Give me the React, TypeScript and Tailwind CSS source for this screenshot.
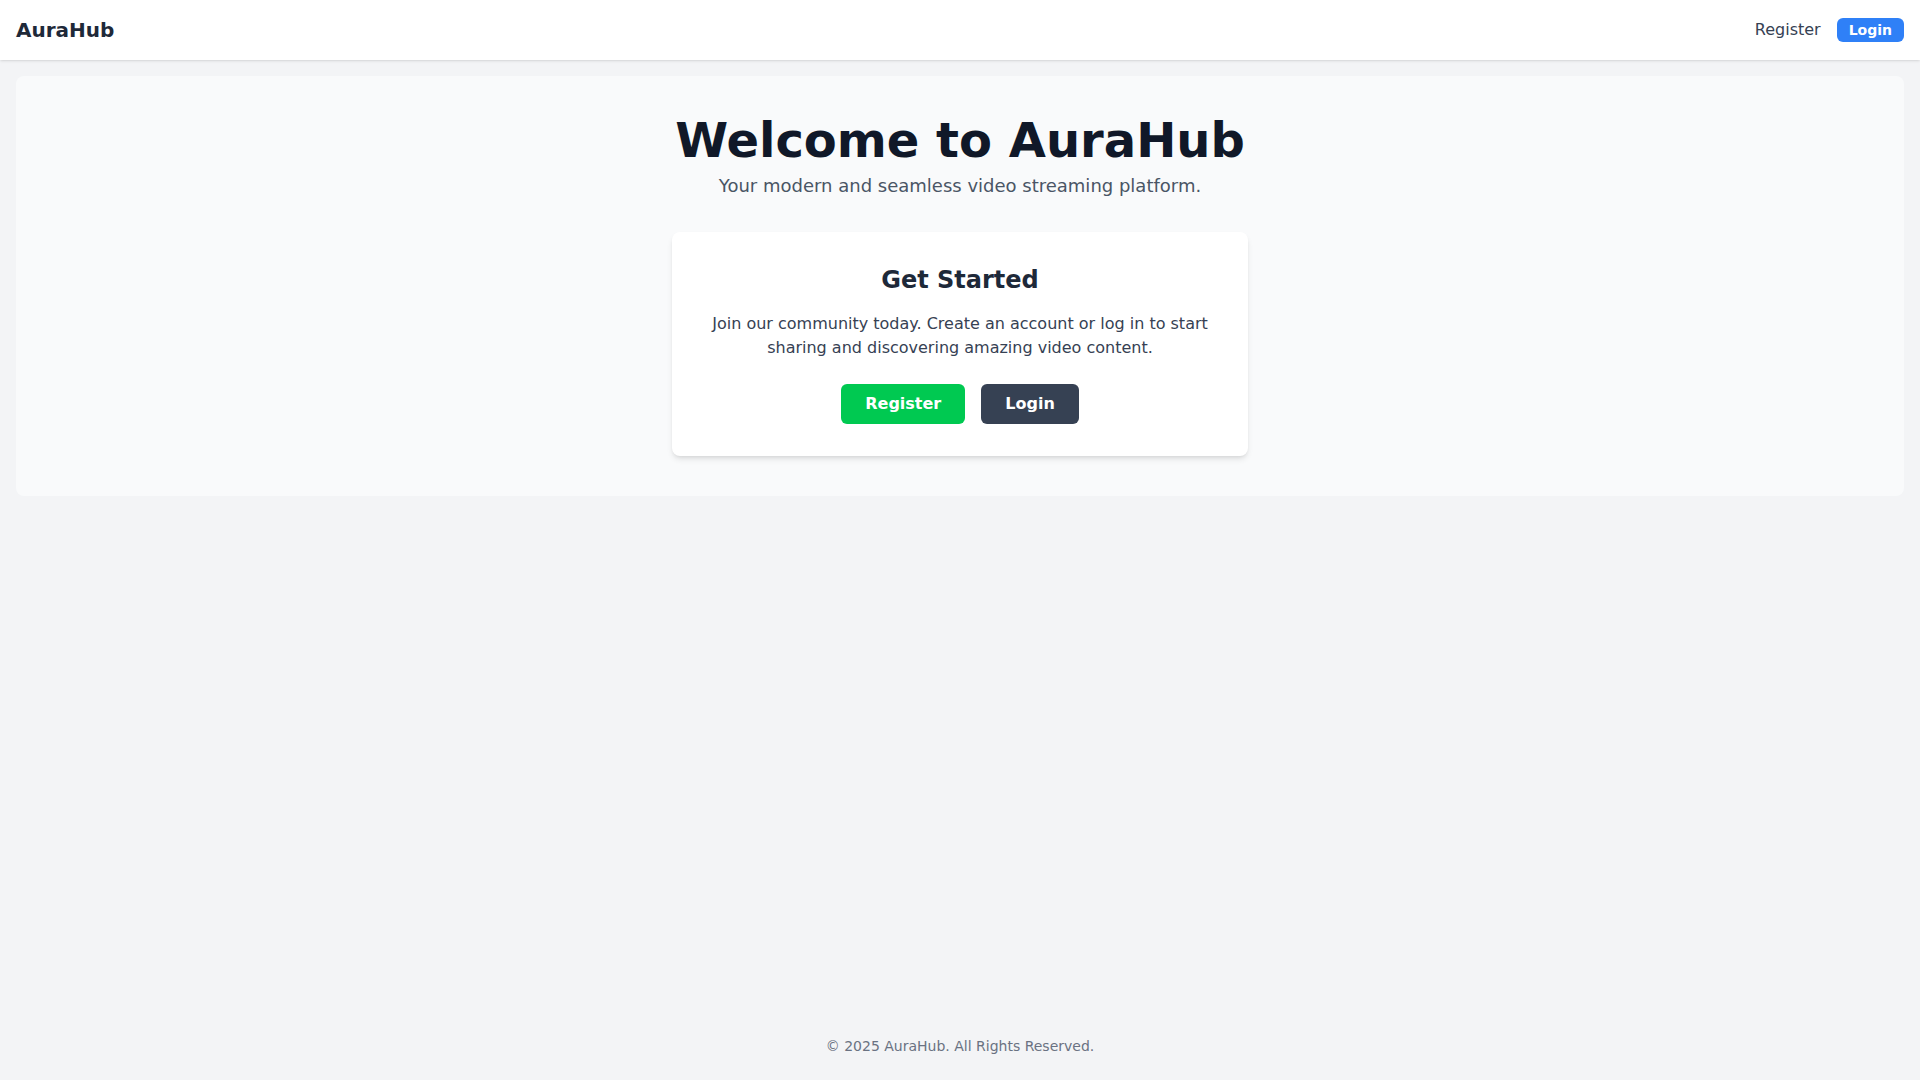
import React from "react";

export default function App() {
  return (
    <div className="min-h-screen flex flex-col bg-gray-100" style={{ fontFamily: '"DejaVu Sans", sans-serif' }}>
      <header className="bg-white shadow h-[60px] flex items-center justify-between px-4">
        <div className="text-xl font-bold text-gray-800">AuraHub</div>
        <nav className="flex items-center gap-4">
          <a className="text-gray-700 text-base cursor-pointer">Register</a>
          <button className="bg-[#2f80f7] text-white text-sm font-bold px-3 py-0.5 rounded-md">Login</button>
        </nav>
      </header>
      <main className="flex-1 p-4">
        <div className="bg-gray-50 rounded-lg py-10 px-4 flex flex-col items-center text-center">
          <h1 className="text-5xl font-bold text-gray-900 leading-none">Welcome to AuraHub</h1>
          <p className="text-lg text-gray-600 mt-2">Your modern and seamless video streaming platform.</p>
          <div className="mt-8 w-full max-w-xl bg-white rounded-lg shadow-md p-8">
            <h2 className="text-2xl font-bold text-gray-800">Get Started</h2>
            <p className="mt-4 text-base text-gray-700">
              Join our community today. Create an account or log in to start sharing and discovering amazing video content.
            </p>
            <div className="mt-6 flex justify-center gap-4">
              <button className="bg-green-500 text-white font-bold px-6 py-2 rounded-md">Register</button>
              <button className="bg-gray-700 text-white font-bold px-6 py-2 rounded-md">Login</button>
            </div>
          </div>
        </div>
      </main>
      <footer className="py-6 text-center text-sm text-gray-500">© 2025 AuraHub. All Rights Reserved.</footer>
    </div>
  );
}
